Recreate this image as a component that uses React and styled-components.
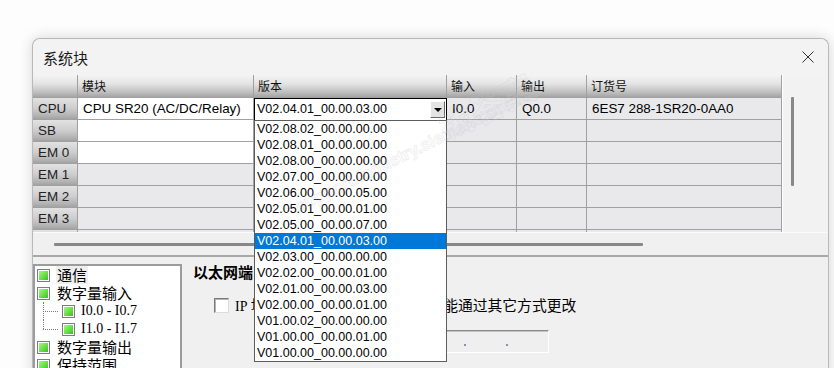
import React from 'react'
import styled, { createGlobalStyle } from 'styled-components'

const GlobalStyle = createGlobalStyle`
  html, body {
    margin: 0;
    padding: 0;
    background: #fdfdfd;
  }
  body {
    font-family: "Liberation Sans", "Noto Sans CJK SC", sans-serif;
    overflow: hidden;
  }
`

const Page = styled.div`
  width: 834px;
  height: 368px;
  overflow: hidden;
  box-sizing: border-box;
  padding: 38px 0 0 32px;
`

const Dialog = styled.div`
  position: relative;
  width: 797px;
  height: 340px;
  box-sizing: border-box;
  background: #f0f0f0;
  border: 1px solid #b8b8b8;
  border-bottom: none;
  border-radius: 8px 8px 0 0;
  box-shadow: 0 0 14px rgba(0, 0, 0, 0.16);
  display: flex;
  flex-direction: column;
`

const TitleBar = styled.div`
  height: 36px;
  flex: none;
  display: flex;
  align-items: center;
  justify-content: space-between;
  padding: 0 14px 0 10px;
  background: #f3f3f3;
  border-radius: 8px 8px 0 0;
`

const Title = styled.span`
  font-family: "Noto Sans CJK SC", sans-serif;
  font-size: 15px;
  color: #1a1a1a;
`

const GridFrame = styled.div`
  flex: none;
  display: flex;
  flex-direction: column;
  border-bottom: 2px solid #a8a8a8;
`

const GridTop = styled.div`
  display: flex;
  height: 157px;
`

const Table = styled.div`
  width: 749px;
  height: 157px;
  overflow: hidden;
  display: grid;
  grid-template-columns: 45px 176px 193px 70px 70px 195px;
  grid-auto-rows: 22px;
  grid-template-rows: 23px;
  align-content: start;
`

const Cell = styled.div`
  box-sizing: border-box;
  border-right: 1px solid #a0a0a0;
  border-bottom: 1px solid #a0a0a0;
  padding-left: 5px;
  display: flex;
  align-items: center;
  font-size: 13.4px;
  color: #000;
  white-space: nowrap;
  overflow: hidden;
  background: ${p => (p.$white ? '#ffffff' : '#e9e9ec')};
`

const HeadCell = styled(Cell)`
  padding-left: 4px;
  padding-bottom: 2px;
  font-family: "Noto Sans CJK SC", sans-serif;
  font-size: 12px;
  color: #111;
  background: linear-gradient(to bottom, #f4f4f4 0%, #e4e4e4 40%, #bdbdbd 80%, #a4a4a4 100%);
`

const RowHead = styled(Cell)`
  color: #222;
  background: linear-gradient(to bottom, #e2e2e2 0%, #cdcdcd 50%, #b2b2b2 85%, #a2a2a2 100%);
`

const Combo = styled.div`
  box-sizing: border-box;
  height: 22px;
  border: 1px solid #000;
  border-bottom: none;
  background: #fff;
  display: flex;
  align-items: flex-start;
`

const ComboText = styled.span`
  flex: 1;
  padding: 3px 0 0 2px;
  font-size: 12.5px;
  line-height: 15px;
  color: #000;
`

const ComboButton = styled.span`
  box-sizing: border-box;
  width: 15px;
  height: 17px;
  margin: 2px 1px 0 0;
  background: #e4e4e4;
  border: 1px solid;
  border-color: #fdfdfd #6a6a6a #6a6a6a #fdfdfd;
  display: flex;
  align-items: center;
  justify-content: center;
  &::after {
    content: "";
    border-left: 4px solid transparent;
    border-right: 4px solid transparent;
    border-top: 4px solid #000;
  }
`

const VScroll = styled.div`
  flex: 1;
  border-left: 1px solid #fff;
  background: #f2f2f2;
`

const VThumb = styled.div`
  width: 3px;
  height: 89px;
  margin: 22px 0 0 8px;
  border-radius: 1px;
  background: #888;
`

const HScroll = styled.div`
  height: 22px;
  border-top: 1px solid #fbfbfb;
  background: #f0f0f0;
`

const HThumb = styled.div`
  width: 589px;
  height: 3px;
  margin: 10px 0 0 21px;
  border-radius: 1px;
  background: #888;
`

const Bottom = styled.div`
  flex: 1;
  display: flex;
  padding-top: 7px;
  min-height: 0;
`

const Tree = styled.div`
  width: 149px;
  height: 130px;
  flex: none;
  box-sizing: border-box;
  border: 2px solid #9c9c9c;
  background: #fff;
  overflow: hidden;
`

const TreeRow = styled.div`
  position: relative;
  height: 18px;
  display: flex;
  align-items: center;
  padding-left: ${p => (p.$child ? '27px' : '2px')};

  ${p =>
    p.$child &&
    `
    &::before {
      content: "";
      position: absolute;
      left: 8px;
      top: 0;
      height: ${p.$last ? '9px' : '18px'};
      border-left: 1px dotted #7a7a7a;
    }
    &::after {
      content: "";
      position: absolute;
      left: 8px;
      top: 9px;
      width: 15px;
      border-top: 1px dotted #7a7a7a;
    }
  `}
`

const TreeIcon = styled.span`
  box-sizing: border-box;
  width: 13px;
  height: 13px;
  flex: none;
  border: 1px solid #7c7c7c;
  background: linear-gradient(135deg, #b6f79a 0%, #6ee04a 50%, #2fb81a 100%);
  box-shadow: inset 0 0 0 1px #fff;
`

const TreeLabel = styled.span`
  margin-left: ${p => (p.$child ? '5px' : '6px')};
  padding: 0 1px;
  height: 18px;
  line-height: 18px;
  font-family: ${p => (p.$latin ? '"Liberation Serif", serif' : '"Noto Sans CJK SC", sans-serif')};
  font-size: ${p => (p.$latin ? '14px' : '15px')};
  color: #000;
  background: ${p => (p.$selected ? '#efefef' : 'transparent')};
  white-space: nowrap;
`

const Content = styled.div`
  margin-left: 11px;
  display: flex;
  flex-direction: column;
`

const Heading = styled.div`
  margin-top: -1px;
  height: 18px;
  line-height: 18px;
  font-family: "Noto Sans CJK SC", sans-serif;
  font-size: 15px;
  font-weight: bold;
  color: #000;
`

const CheckRow = styled.div`
  margin: 17px 0 0 21px;
  height: 15px;
  display: flex;
  align-items: center;
`

const CheckBox = styled.span`
  box-sizing: border-box;
  width: 15px;
  height: 15px;
  flex: none;
  background: #fff;
  border: 1px solid;
  border-color: #7a7a7a #dcdcdc #dcdcdc #7a7a7a;
  box-shadow: inset 1px 1px 0 #b4b4b4;
`

const CheckLabel = styled.span`
  margin-left: 6px;
  font-family: "Noto Sans CJK SC", sans-serif;
  font-size: 14.8px;
  line-height: 15px;
  color: #000;
  white-space: nowrap;
`

const Latin = styled.span`
  font-family: "Liberation Serif", serif;
  font-size: 14px;
`

const IpRow = styled.div`
  margin: 17px 0 0 188px;
  display: flex;
  align-items: center;
`

const IpBox = styled.div`
  box-sizing: border-box;
  width: 168px;
  height: 23px;
  display: flex;
  border: 1px solid;
  border-color: #8a8a8a #fff #fff #8a8a8a;
  box-shadow: inset 1px 1px 0 #c4c4c4;
  background: #efefef;
`

const IpField = styled.span`
  flex: 1;
  display: flex;
  justify-content: flex-end;
  align-items: flex-end;
  padding-bottom: 6px;
  &:last-child::after {
    display: none;
  }
  &::after {
    content: "";
    width: 2px;
    height: 2px;
    margin-right: -1px;
    background: #8a94a8;
  }
`

const DropList = styled.ul`
  position: absolute;
  left: 221px;
  top: 81px;
  width: 193px;
  margin: 0;
  padding: 0;
  list-style: none;
  box-sizing: border-box;
  border: 1px solid #5c5c5c;
  background: #fff;
  z-index: 5;
`

const DropItem = styled.li`
  height: 16px;
  line-height: 16px;
  padding-left: 2px;
  font-size: 12.5px;
  color: ${p => (p.$active ? '#fff' : '#000')};
  background: ${p => (p.$active ? '#0078d7' : 'transparent')};
  white-space: nowrap;
`

const Watermark = styled.span`
  position: absolute;
  left: ${p => p.$x}px;
  top: ${p => p.$y}px;
  font-family: ${p => (p.$cjk ? '"Noto Sans CJK SC", sans-serif' : '"Liberation Sans", sans-serif')};
  font-size: ${p => p.$size}px;
  font-weight: bold;
  color: transparent;
  -webkit-text-stroke: 1px rgba(200, 200, 200, 0.28);
  transform: rotate(-26deg);
  transform-origin: left bottom;
  white-space: nowrap;
  pointer-events: none;
  z-index: 10;
`

const CloseIcon = () => (
  <svg width="12" height="12" viewBox="0 0 12 12">
    <path d="M0.5 0.5 L11.5 11.5 M11.5 0.5 L0.5 11.5" stroke="#333" strokeWidth="1" fill="none" />
  </svg>
)

const rows = [
  { head: 'CPU', module: 'CPU SR20 (AC/DC/Relay)', white: true, combo: true, input: 'I0.0', output: 'Q0.0', order: '6ES7 288-1SR20-0AA0' },
  { head: 'SB', white: true },
  { head: 'EM 0', white: true },
  { head: 'EM 1' },
  { head: 'EM 2' },
  { head: 'EM 3' },
  { head: '' },
]

const versions = [
  'V02.08.02_00.00.00.00',
  'V02.08.01_00.00.00.00',
  'V02.08.00_00.00.00.00',
  'V02.07.00_00.00.00.00',
  'V02.06.00_00.00.05.00',
  'V02.05.01_00.00.01.00',
  'V02.05.00_00.00.07.00',
  'V02.04.01_00.00.03.00',
  'V02.03.00_00.00.00.00',
  'V02.02.00_00.00.01.00',
  'V02.01.00_00.00.03.00',
  'V02.00.00_00.00.01.00',
  'V01.00.02_00.00.00.00',
  'V01.00.00_00.00.01.00',
  'V01.00.00_00.00.00.00',
]

const tree = [
  { label: '通信', selected: true },
  { label: '数字量输入' },
  { label: 'I0.0 - I0.7', child: true, latin: true },
  { label: 'I1.0 - I1.7', child: true, latin: true, last: true },
  { label: '数字量输出' },
  { label: '保持范围' },
]

export default function App() {
  return (
    <Page>
      <GlobalStyle />
      <Dialog>
        <TitleBar>
          <Title>系统块</Title>
          <CloseIcon />
        </TitleBar>

        <GridFrame>
          <GridTop>
            <Table>
              <HeadCell />
              <HeadCell>模块</HeadCell>
              <HeadCell>版本</HeadCell>
              <HeadCell>输入</HeadCell>
              <HeadCell>输出</HeadCell>
              <HeadCell>订货号</HeadCell>
              {rows.map((r, i) => (
                <React.Fragment key={i}>
                  <RowHead>{r.head}</RowHead>
                  <Cell $white={r.white}>{r.module}</Cell>
                  {r.combo ? (
                    <Combo>
                      <ComboText>V02.04.01_00.00.03.00</ComboText>
                      <ComboButton />
                    </Combo>
                  ) : (
                    <Cell $white={r.white} />
                  )}
                  <Cell>{r.input}</Cell>
                  <Cell>{r.output}</Cell>
                  <Cell>{r.order}</Cell>
                </React.Fragment>
              ))}
            </Table>
            <VScroll>
              <VThumb />
            </VScroll>
          </GridTop>
          <HScroll>
            <HThumb />
          </HScroll>
        </GridFrame>

        <Bottom>
          <Tree>
            {tree.map(t => (
              <TreeRow key={t.label} $child={t.child} $last={t.last}>
                <TreeIcon />
                <TreeLabel $child={t.child} $latin={t.latin} $selected={t.selected}>
                  {t.label}
                </TreeLabel>
              </TreeRow>
            ))}
          </Tree>
          <Content>
            <Heading>以太网端口</Heading>
            <CheckRow>
              <CheckBox />
              <CheckLabel>
                <Latin>IP</Latin> 地址数据固定为下面的值，不能通过其它方式更改
              </CheckLabel>
            </CheckRow>
            <IpRow>
              <IpBox>
                <IpField />
                <IpField />
                <IpField />
                <IpField />
              </IpBox>
            </IpRow>
          </Content>
        </Bottom>

        <DropList>
          {versions.map(v => (
            <DropItem key={v} $active={v === 'V02.04.01_00.00.03.00'}>
              {v}
            </DropItem>
          ))}
        </DropList>

        <Watermark $x={418} $y={62} $size={34} $cjk>找答案</Watermark>
        <Watermark $x={268} $y={158} $size={17}>support.industry.siemens.com/cs</Watermark>
      </Dialog>
    </Page>
  )
}
